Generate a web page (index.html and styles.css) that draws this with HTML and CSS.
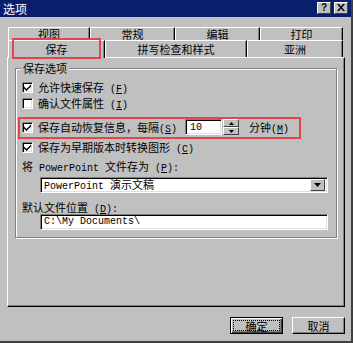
FILE: index.html
```html
<!DOCTYPE html>
<html>
<head>
<meta charset="utf-8">
<link rel="stylesheet" href="styles.css">
</head>
<body>
<div class="window">
  <div class="titlebar">
    <span class="title">选项</span>
    <div class="tbtns">
      <span class="tbtn">?</span>
      <span class="tbtn close">
        <svg width="8" height="7" viewBox="0 0 8 7"><path d="M0 0h2l2 2.5L6 0h2L5 3.5 8 7H6L4 4.5 2 7H0l3-3.5z" fill="#000"/></svg>
      </span>
    </div>
  </div>

  <div class="tabs">
    <div class="tabrow back">
      <div class="tab t1">视图</div>
      <div class="tab t2">常规</div>
      <div class="tab t3">编辑</div>
      <div class="tab t4">打印</div>
    </div>
    <div class="tabrow front">
      <div class="tab sel f1">保存</div>
      <div class="tab f2">拼写检查和样式</div>
      <div class="tab f3">亚洲</div>
    </div>
  </div>

  <div class="panel">
    <div class="group">
      <span class="legend">保存选项</span>
      <div class="row cb-row">
        <span class="cb checked"><svg width="7" height="7" viewBox="0 0 7 7"><path d="M0 2.5l2.5 2.5L7 0.5v2L2.5 7 0 4.5z" fill="#000"/></svg></span>
        <span>允许快速保存<span class="m"> (<u>F</u>)</span></span>
      </div>
      <div class="row cb-row">
        <span class="cb"></span>
        <span>确认文件属性<span class="m"> (<u>I</u>)</span></span>
      </div>
      <div class="row cb-row r3">
        <span class="cb checked"><svg width="7" height="7" viewBox="0 0 7 7"><path d="M0 2.5l2.5 2.5L7 0.5v2L2.5 7 0 4.5z" fill="#000"/></svg></span>
        <span class="lbl3">保存自动恢复信息，每隔<span class="m">(<u>S</u>)</span></span>
        <span class="textbox num"><span class="m">10</span></span>
        <span class="spin">
          <span class="sbtn"><svg width="5" height="3" viewBox="0 0 5 3"><path d="M2.5 0L5 3H0z" fill="#000"/></svg></span>
          <span class="sbtn"><svg width="5" height="3" viewBox="0 0 5 3"><path d="M0 0h5L2.5 3z" fill="#000"/></svg></span>
        </span>
        <span class="minutes">分钟<span class="m">(<u>M</u>)</span></span>
      </div>
      <div class="row cb-row r4">
        <span class="cb checked"><svg width="7" height="7" viewBox="0 0 7 7"><path d="M0 2.5l2.5 2.5L7 0.5v2L2.5 7 0 4.5z" fill="#000"/></svg></span>
        <span>保存为早期版本时转换图形<span class="m"> (<u>C</u>)</span></span>
      </div>
      <div class="row lbl r5"><span>将<span class="m"> PowerPoint </span>文件存为<span class="m"> (<u>P</u>):</span></span></div>
      <div class="field select">
        <span class="val"><span class="m">PowerPoint </span>演示文稿</span>
        <span class="ddbtn"><svg width="7" height="4" viewBox="0 0 7 4"><path d="M0 0h7L3.5 4z" fill="#000"/></svg></span>
      </div>
      <div class="row lbl r6"><span>默认文件位置<span class="m"> (<u>D</u>):</span></span></div>
      <div class="field input"><span class="val m">C:\My Documents\</span></div>
    </div>
  </div>

  <div class="buttons">
    <div class="btn default"><span class="focus">确定</span></div>
    <div class="btn">取消</div>
  </div>

  <div class="hl hl-tab"></div>
  <div class="hl hl-row"></div>
</div>
</body>
</html>
```

FILE: styles.css
```css
* { box-sizing: border-box; }
html, body { margin: 0; padding: 0; }
body {
  width: 353px;
  height: 343px;
  overflow: hidden;
  background: #c0c0c0;
  font-family: "Noto Sans CJK SC", "Liberation Sans", sans-serif;
  font-size: 11px;
  color: #000;
}
.window {
  position: relative;
  width: 353px;
  height: 343px;
  background: #c0c0c0;
  border-right: 2px solid #404040;
  border-bottom: 2px solid #404040;
}
.m { font-family: "Liberation Mono", "Noto Sans CJK SC", monospace; font-size: 10px; }
u { text-decoration: underline; }

.titlebar {
  height: 17px;
  background: #0a1f6b;
  display: flex;
  align-items: center;
  justify-content: space-between;
  padding: 0 3px 0 3px;
}
.title { color: #fff; font-size: 12px; line-height: 17px; }
.tbtns { display: flex; gap: 3px; margin-top: -2px; }
.tbtn {
  width: 14px;
  height: 12px;
  background: #c0c0c0;
  border-top: 1px solid #fff;
  border-left: 1px solid #fff;
  border-right: 1px solid #404040;
  border-bottom: 1px solid #404040;
  display: flex;
  align-items: center;
  justify-content: center;
  font-family: "Liberation Sans", sans-serif;
  font-weight: bold;
  font-size: 10px;
  line-height: 10px;
}

.tabs { padding-top: 10px; padding-left: 8px; }
.tabrow { display: flex; }
.tabrow.back { height: 13px; }
.tabrow.front { height: 17px; position: relative; }
.tab {
  display: flex;
  align-items: center;
  justify-content: center;
  background: #c0c0c0;
  border-top: 1px solid #fff;
  border-left: 1px solid #fff;
  border-right: 1px solid #000;
  box-shadow: inset -1px 0 #808080;
  font-size: 11px;
  line-height: 11px;
}
.tabrow.back .tab { padding-top: 1px; }
.t1 { width: 82px; }
.t2 { width: 85px; }
.t3 { width: 85px; }
.t4 { width: 83px; }
.f1 { width: 97px; }
.f2 { width: 142px; }
.f3 { width: 96px; }
.tab.sel {
  position: relative;
  z-index: 2;
  height: 18px;
  margin-bottom: -1px;
}

.panel {
  margin-left: 7px;
  width: 338px;
  height: 250px;
  border-top: 1px solid #fff;
  border-left: 1px solid #fff;
  border-right: 1px solid #000;
  border-bottom: 1px solid #000;
  box-shadow: inset -1px -1px #808080;
  padding-top: 10px;
  padding-left: 7px;
}
.group {
  position: relative;
  width: 322px;
  height: 170px;
  border: 1px solid #808080;
  box-shadow: inset 1px 1px #fff, 1px 1px #fff;
  padding: 10px 0 7px 0;
  display: flex;
  flex-direction: column;
}
.legend {
  position: absolute;
  top: -8px;
  left: 5px;
  padding: 0 2px;
  background: #c0c0c0;
  line-height: 14px;
}
.row { display: flex; align-items: center; height: 16px; white-space: nowrap; }
.cb-row { padding-left: 6px; }
.cb-row .cb { margin-right: 5px; }
.r3 { margin-top: 8px; }
.r4 { margin-top: 4px; }
.r5 { margin-top: 4px; padding-left: 6px; }
.r6 { margin-top: 9px; height: 12px; padding-left: 6px; }
.lbl { line-height: 12px; }

.cb {
  width: 11px;
  height: 11px;
  flex: none;
  background: #fff;
  border-top: 1px solid #808080;
  border-left: 1px solid #808080;
  border-right: 1px solid #fff;
  border-bottom: 1px solid #fff;
  box-shadow: inset 1px 1px #000, inset -1px -1px #dfdfdf;
  display: flex;
  align-items: center;
  justify-content: center;
}
.lbl3 { flex: none; width: 147px; }
.textbox {
  flex: none;
  width: 37px;
  height: 16px;
  background: #fff;
  border-top: 1px solid #808080;
  border-left: 1px solid #808080;
  border-right: 1px solid #fff;
  border-bottom: 1px solid #fff;
  box-shadow: inset 1px 1px #000, inset -1px -1px #dfdfdf;
  display: flex;
  align-items: center;
  padding-left: 4px;
}
.spin {
  flex: none;
  width: 16px;
  height: 16px;
  display: flex;
  flex-direction: column;
  margin-left: 1px;
}
.sbtn {
  flex: 1;
  background: #c0c0c0;
  border-top: 1px solid #fff;
  border-left: 1px solid #fff;
  border-right: 1px solid #404040;
  border-bottom: 1px solid #404040;
  display: flex;
  align-items: center;
  justify-content: center;
}
.minutes { margin-left: 10px; }

.field {
  margin-left: 24px;
  width: 288px;
  height: 16px;
  background: #fff;
  border-top: 1px solid #808080;
  border-left: 1px solid #808080;
  border-right: 1px solid #fff;
  border-bottom: 1px solid #fff;
  box-shadow: inset 1px 1px #000, inset -1px -1px #dfdfdf;
  display: flex;
  align-items: center;
  justify-content: space-between;
  white-space: nowrap;
}
.select { margin-top: 2px; }
.field .val { padding-left: 3px; line-height: 12px; }
.ddbtn {
  width: 15px;
  height: 12px;
  margin-right: 2px;
  background: #c0c0c0;
  border-top: 1px solid #fff;
  border-left: 1px solid #fff;
  border-right: 1px solid #404040;
  border-bottom: 1px solid #404040;
  display: flex;
  align-items: center;
  justify-content: center;
}

.buttons {
  display: flex;
  justify-content: flex-end;
  gap: 9px;
  margin-top: 10px;
  padding-right: 6px;
}
.btn {
  width: 53px;
  height: 17px;
  background: #c0c0c0;
  border-top: 1px solid #fff;
  border-left: 1px solid #fff;
  border-right: 1px solid #000;
  border-bottom: 1px solid #000;
  box-shadow: inset -1px -1px #808080;
  display: flex;
  align-items: center;
  justify-content: center;
  line-height: 12px;
}
.btn.default {
  border: 1px solid #000;
  box-shadow: inset 1px 1px #fff, inset -1px -1px #404040, inset -2px -2px #808080;
  padding: 2px;
}
.focus {
  flex: 1;
  align-self: stretch;
  border: 1px dotted #000;
  display: flex;
  align-items: center;
  justify-content: center;
}

.hl {
  position: absolute;
  z-index: 5;
  border: 2px solid #e0474c;
  pointer-events: none;
}
.hl-tab { left: 12px; top: 38px; width: 89px; height: 21px; }
.hl-row { left: 18px; top: 117px; width: 283px; height: 22px; }
```
